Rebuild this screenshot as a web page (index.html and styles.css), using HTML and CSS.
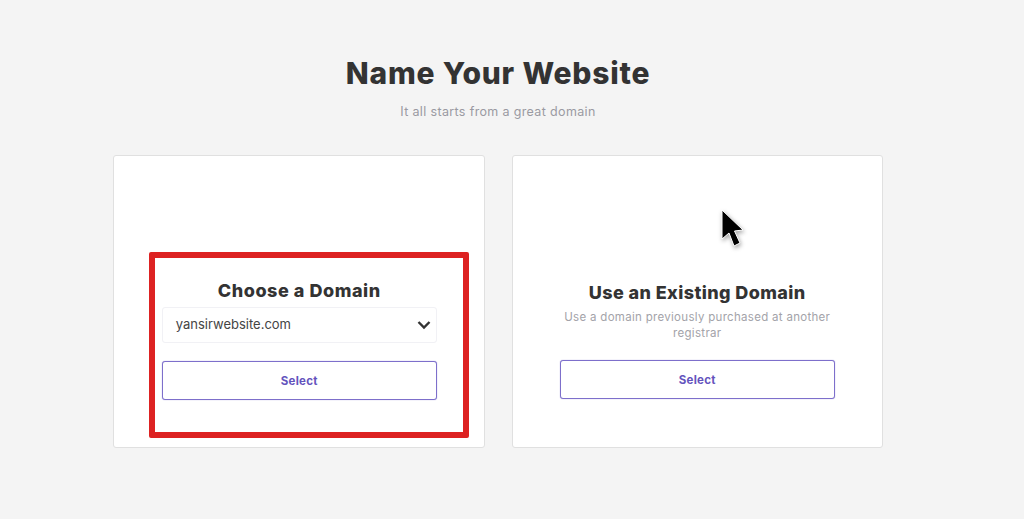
FILE: index.html
```html
<!DOCTYPE html>
<html lang="en">
<head>
    <meta charset="UTF-8">
    <meta name="viewport" content="width=device-width, initial-scale=1.0">
    <title>Name Your Website</title>
    <link rel="stylesheet" href="styles.css">
</head>
<body>
    <div class="container">
        <h1>Name Your Website</h1>
        <p class="subtitle">It all starts from a great domain</p>
        <div class="cards">
            <div class="card card-choose">
                <h2>Choose a Domain</h2>
                <div class="domain-select">
                    <span>yansirwebsite.com</span>
                    <svg class="chevron" width="14" height="10" viewBox="0 0 14 10"><path d="M1.5 2 L7 7.5 L12.5 2" fill="none" stroke="#333" stroke-width="2.4"/></svg>
                </div>
                <button type="button" class="select-btn">Select</button>
                <div class="highlight"></div>
            </div>
            <div class="card card-existing">
                <h2>Use an Existing Domain</h2>
                <p class="card-text">Use a domain previously purchased at another registrar</p>
                <button type="button" class="select-btn">Select</button>
                <svg class="cursor" width="28" height="42" viewBox="0 0 28 42">
                    <path d="M3 2 L3 31 L10 25 L15 38 L21 35 L15.500 23 L24 22 Z" fill="#000" stroke="#fff" stroke-width="1"/>
                </svg>
            </div>
        </div>
    </div>
</body>
</html>
```

FILE: styles.css
```css
/* Reset default margin and padding */
* {
    margin: 0;
    padding: 0;
    box-sizing: border-box;
}

body {
    font-family: Inter, "Open Sans", sans-serif;
    background-color: #f4f4f4;
    height: 519px;
    overflow: hidden;
}

.container {
    width: 770px;
    margin-left: 113px;
    padding-top: 55px;
    text-align: center;
}

h1 {
    font-size: 30px;
    line-height: 36px;
    font-weight: 800;
    letter-spacing: 0.8px;
    color: #333;
}

.subtitle {
    margin-top: 13px;
    font-size: 12.500px;
    line-height: 16px;
    letter-spacing: 0.35px;
    color: #9a9aa2;
}

.cards {
    display: flex;
    gap: 27px;
    margin-top: 35px;
}

.card {
    position: relative;
    width: 371.500px;
    height: 293px;
    padding-bottom: 47px;
    background-color: #fff;
    border: 1px solid #e0e0e0;
    border-radius: 3px;
    display: flex;
    flex-direction: column;
    justify-content: flex-end;
    align-items: center;
}

.card-choose {
    padding-left: 1px;
}

.card h2 {
    font-size: 18px;
    line-height: 24px;
    font-weight: 800;
    letter-spacing: 0.55px;
    color: #333;
}

.card-existing h2 {
    letter-spacing: 0.4px;
}

.domain-select {
    width: 275px;
    height: 36px;
    margin: 4px 0 18px;
    padding: 0 5px 2px 13px;
    border: 1px solid #f1f1f5;
    border-radius: 3px;
    display: flex;
    align-items: center;
    justify-content: space-between;
    font-size: 13px;
    color: #444;
}

.chevron {
    margin-top: 2px;
}

.card-text {
    width: 275px;
    margin: 4px 0 19px;
    font-size: 11.500px;
    line-height: 16px;
    letter-spacing: 0.3px;
    color: #a3a3a9;
}

.select-btn {
    width: 275px;
    height: 39px;
    background-color: #fff;
    border: 1px solid #7d6fcb;
    border-radius: 3px;
    box-shadow: 0 0 1px #8d80d2;
    font-family: inherit;
    font-size: 11.500px;
    font-weight: 700;
    letter-spacing: 0.3px;
    color: #6453bd;
}

.card-existing {
    padding-bottom: 48px;
}

/* Red annotation drawn on top of the left card */
.highlight {
    position: absolute;
    left: 35px;
    top: 96px;
    width: 320px;
    height: 186px;
    border: 6px solid #dd2222;
    border-radius: 2px;
}

.cursor {
    position: absolute;
    left: 206px;
    top: 52px;
    filter: drop-shadow(1px 2px 2px rgba(0, 0, 0, 0.35));
}
```
